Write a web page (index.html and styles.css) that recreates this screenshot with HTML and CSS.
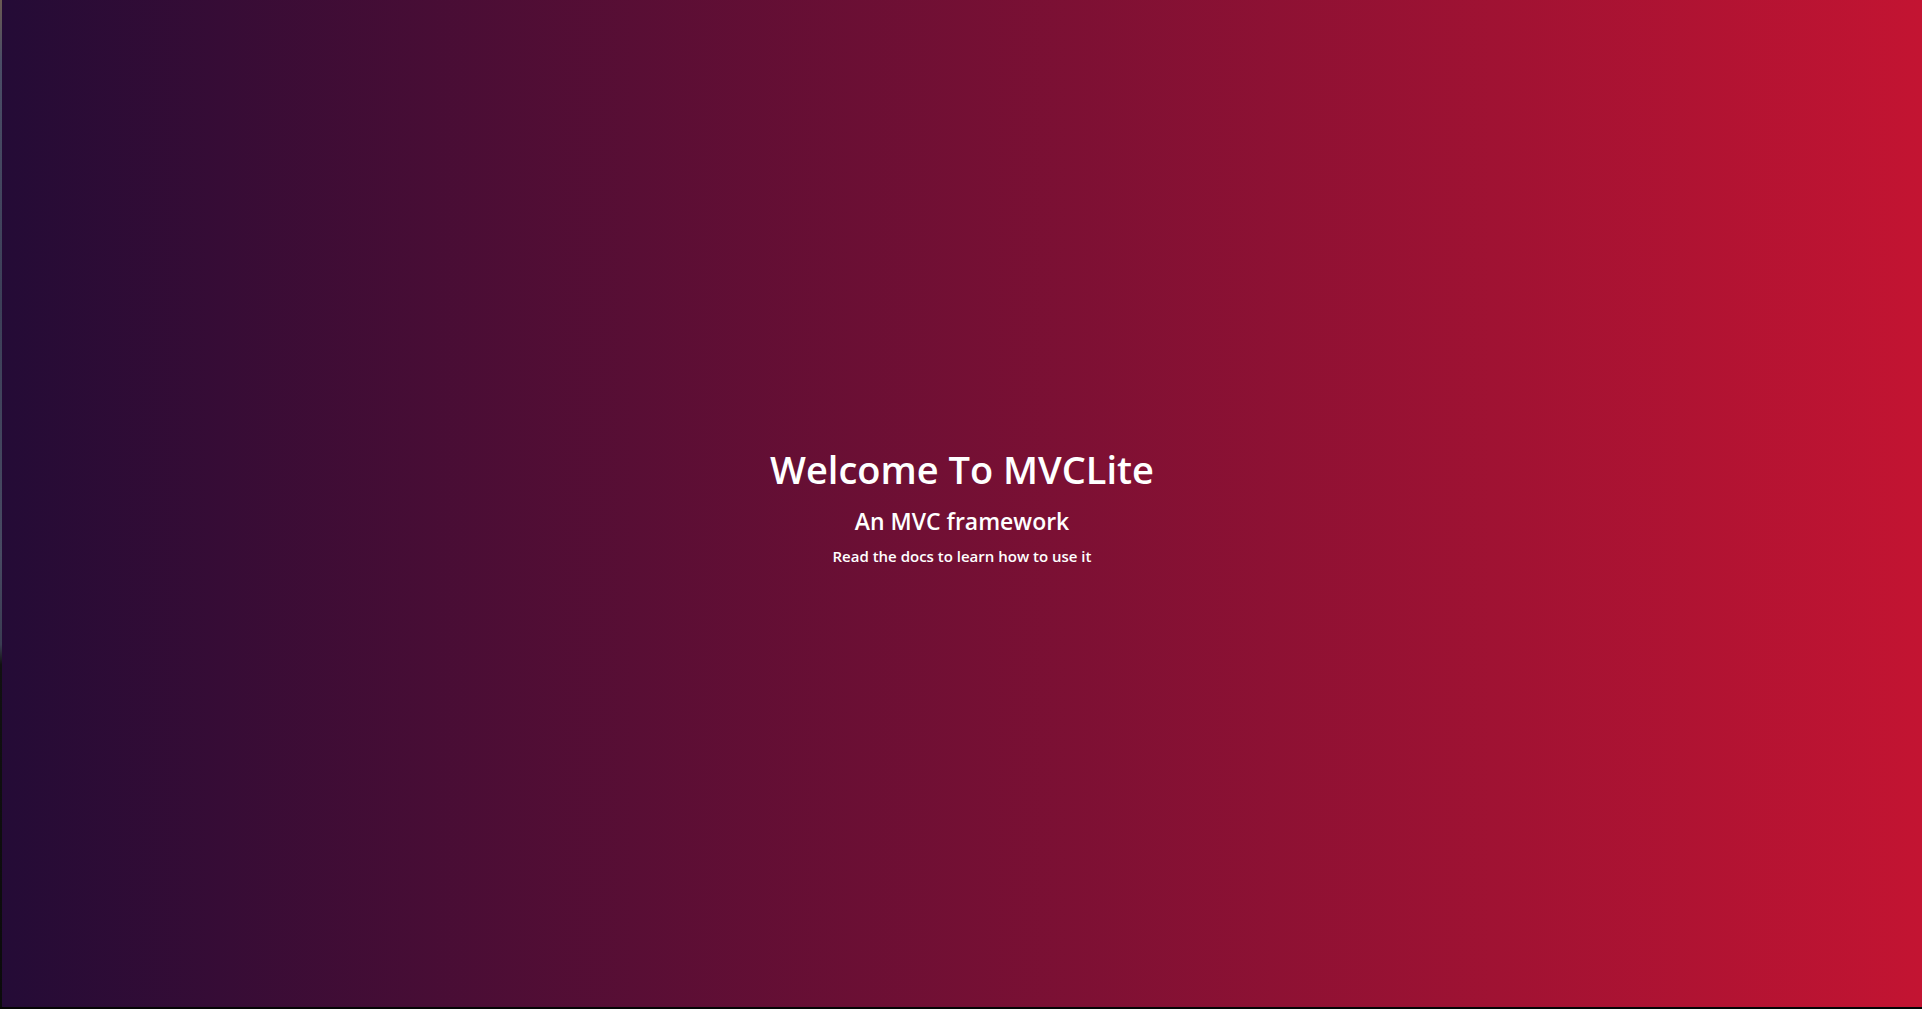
FILE: index.html
```html
<!DOCTYPE html>
<html lang="en">
<head>
<meta charset="utf-8">
<title>MVCLite</title>
<link rel="stylesheet" href="styles.css">
</head>
<body>
<div class="frame">
  <div class="edge"></div>
  <main class="hero">
    <div class="intro">
      <h1 class="title">Welcome To MVCLite</h1>
      <h2 class="subtitle">An MVC framework</h2>
      <p class="hint">Read the docs to learn how to use it</p>
    </div>
  </main>
</div>
<div class="bottom"></div>
</body>
</html>
```
FILE: styles.css
```css
html, body {
  margin: 0;
  padding: 0;
  height: 100%;
  background: #000;
}
body {
  display: flex;
  flex-direction: column;
  font-family: "Open Sans", "Noto Sans", sans-serif;
  color: #fff;
}
.frame {
  flex: 1;
  display: flex;
  min-height: 0;
}
.edge {
  width: 2px;
  background: linear-gradient(to bottom, #6a5a52 0, #4a4d66 6%, #3c3f58 30%, #474a62 55%, #3a3c52 64%, #111 66%, #0b0b0b 100%);
}
.bottom {
  height: 2px;
  background: #050505;
}
.hero {
  flex: 1;
  display: flex;
  align-items: center;
  justify-content: center;
  background: linear-gradient(to right, #240b36, #c31432);
}
.intro {
  display: flex;
  flex-direction: column;
  align-items: center;
  text-align: center;
  margin-top: 2px;
}
.title {
  margin: 0;
  font-size: 38px;
  font-weight: 600;
  line-height: 52px;
}
.subtitle {
  margin: 0;
  font-size: 23px;
  font-weight: 600;
  line-height: 34px;
  margin-top: 9px;
}
.hint {
  margin: 0;
  font-size: 15px;
  font-weight: 600;
  line-height: 22px;
  margin-top: 7px;
}
```
